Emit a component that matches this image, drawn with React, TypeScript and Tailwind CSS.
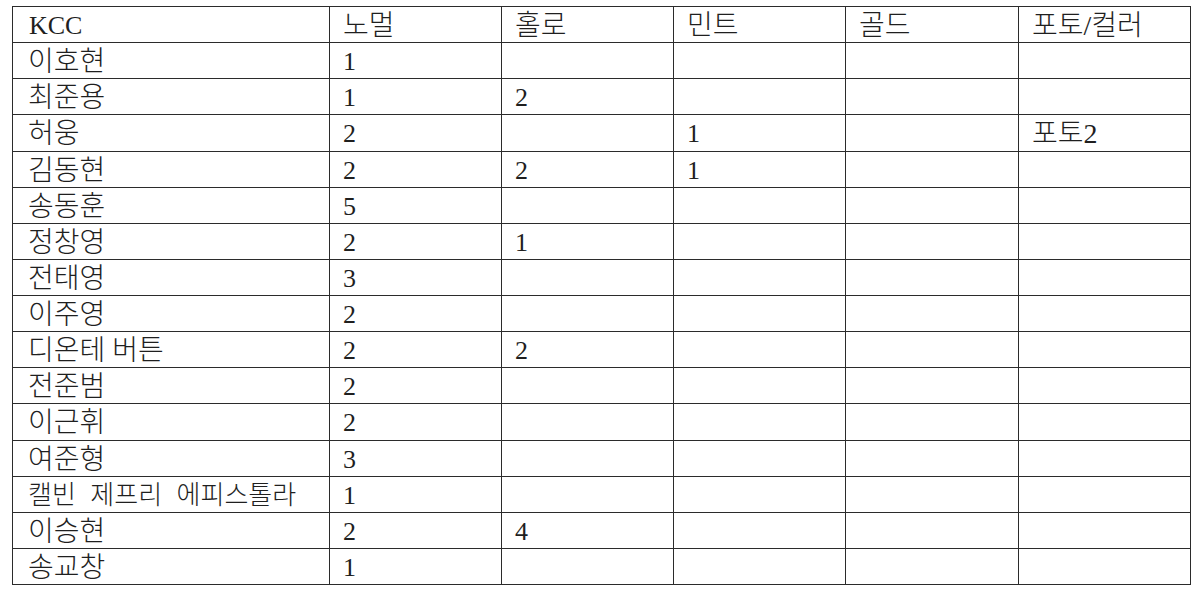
const headers = ["KCC", "노멀", "홀로", "민트", "골드", "포토/컬러"];

const rows: string[][] = [
  ["이호현", "1", "", "", "", ""],
  ["최준용", "1", "2", "", "", ""],
  ["허웅", "2", "", "1", "", "포토2"],
  ["김동현", "2", "2", "1", "", ""],
  ["송동훈", "5", "", "", "", ""],
  ["정창영", "2", "1", "", "", ""],
  ["전태영", "3", "", "", "", ""],
  ["이주영", "2", "", "", "", ""],
  ["디온테 버튼", "2", "2", "", "", ""],
  ["전준범", "2", "", "", "", ""],
  ["이근휘", "2", "", "", "", ""],
  ["여준형", "3", "", "", "", ""],
  ["캘빈 제프리 에피스톨라", "1", "", "", "", ""],
  ["이승현", "2", "4", "", "", ""],
  ["송교창", "1", "", "", "", ""],
];

const widths = ["w-[317px]", "w-[172px]", "w-[172px]", "w-[172px]", "w-[173px]", "w-[172px]"];

// Hangul reads a touch larger than the digits in the scan
const sizeFor = (c: string) => {
  if (c.length > 8) return "text-[26px] [word-spacing:8px]";
  if (/[가-힣]/.test(c)) return "text-[28px]";
  return "text-[26px]";
};

export default function App() {
  return (
    <div
      className="w-[1200px] h-[591px] bg-white pt-[6px] pl-[12px] text-[#1f1f1f]"
      style={{ fontFamily: '"Liberation Serif", "Noto Sans CJK KR", serif' }}
    >
      <table className="border-collapse table-fixed font-light leading-none">
        <thead>
          <tr>
            {headers.map((h, i) => (
              <th
                key={h}
                className={`${widths[i]} ${sizeFor(h)} h-[36.13px] pt-[2px] border-[1.5px] border-[#2b2b2b] text-left font-light align-middle ${i === 0 ? "pl-[16px]" : "pl-[13px]"}`}
              >
                {h}
              </th>
            ))}
          </tr>
        </thead>
        <tbody>
          {rows.map((r) => (
            <tr key={r[0]}>
              {r.map((c, i) => (
                <td
                  key={i}
                  className={`${sizeFor(c)} h-[36.13px] pt-[3px] border-[1.5px] border-[#2b2b2b] align-middle whitespace-nowrap ${i === 0 ? "pl-[15px]" : "pl-[13px]"}`}
                >
                  {c}
                </td>
              ))}
            </tr>
          ))}
        </tbody>
      </table>
    </div>
  );
}
